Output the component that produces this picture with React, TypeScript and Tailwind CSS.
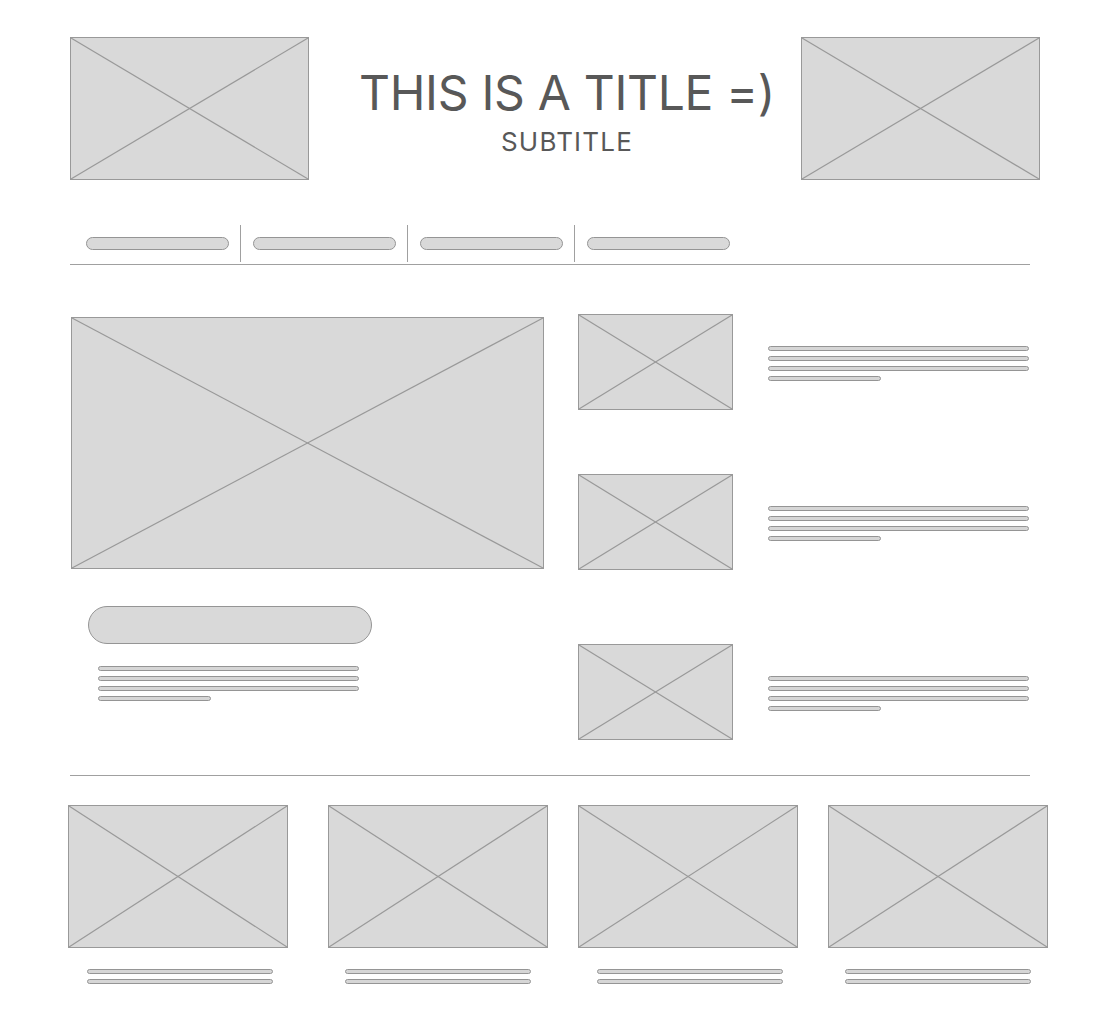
import React from "react";

function Ph({ className }: { className: string }) {
  return (
    <div className={`relative shrink-0 border border-[#999999] bg-[#d9d9d9] ${className}`}>
      <svg className="absolute inset-0 h-full w-full overflow-visible" preserveAspectRatio="none" viewBox="0 0 100 100">
        <line x1="0" y1="0" x2="100" y2="100" stroke="#999999" strokeWidth="1.2" vectorEffect="non-scaling-stroke" />
        <line x1="0" y1="100" x2="100" y2="0" stroke="#999999" strokeWidth="1.2" vectorEffect="non-scaling-stroke" />
      </svg>
    </div>
  );
}

function Bar({ className }: { className: string }) {
  return <div className={`h-[5px] rounded-full border border-[#959595] bg-[#d6d6d6] ${className}`} />;
}

function Lines4({ className }: { className?: string }) {
  return (
    <div className={`flex w-[261px] flex-col gap-[5px] ${className ?? ""}`}>
      <Bar className="w-[261px]" />
      <Bar className="w-[261px]" />
      <Bar className="w-[261px]" />
      <Bar className="w-[113px]" />
    </div>
  );
}

function NavPill() {
  return <div className="h-[13px] w-[143px] shrink-0 rounded-full border border-[#959595] bg-[#d9d9d9]" />;
}

function Sep() {
  return <div className="ml-[11px] mr-[12px] h-[37px] w-px shrink-0 bg-[#a0a0a0]" />;
}

function SideRow({ className }: { className: string }) {
  return (
    <div className={`flex items-center ${className}`}>
      <Ph className="h-[96px] w-[155px]" />
      <Lines4 className="ml-[35px] mt-[3px]" />
    </div>
  );
}

function BottomCard({ className, lineOffset }: { className: string; lineOffset: string }) {
  return (
    <div className={`flex w-[220px] shrink-0 flex-col ${className}`}>
      <Ph className="h-[143px] w-[220px]" />
      <div className={`mt-[21px] flex w-[186px] flex-col gap-[5px] ${lineOffset}`}>
        <Bar className="w-[186px]" />
        <Bar className="w-[186px]" />
      </div>
    </div>
  );
}

export default function App() {
  return (
    <div className="min-h-[1024px] w-[1099px] bg-white pt-[37px] font-['Inter',sans-serif]">
      {/* Header */}
      <div className="flex pl-[70px]">
        <Ph className="h-[143px] w-[239px]" />
        <div className="flex w-[492px] flex-col items-center pl-[24px] text-[#585858]">
          <div className="mt-[32px] text-[48px] leading-none tracking-[-0.3px]">THIS IS A TITLE =)</div>
          <div className="mt-[12px] text-[26px] leading-none tracking-[1.2px]">SUBTITLE</div>
        </div>
        <Ph className="h-[143px] w-[239px]" />
      </div>

      {/* Nav */}
      <div className="ml-[70px] mt-[45px] flex h-[37px] w-[960px] items-center pl-[16px]">
        <NavPill />
        <Sep />
        <NavPill />
        <Sep />
        <NavPill />
        <Sep />
        <NavPill />
      </div>
      <div className="ml-[70px] mt-[2px] h-px w-[960px] bg-[#a0a0a0]" />

      {/* Main */}
      <div className="flex">
        <div className="ml-[71px] flex w-[473px] flex-col">
          <Ph className="mt-[52px] h-[252px] w-[473px]" />
          <div className="ml-[17px] mt-[37px] h-[38px] w-[284px] rounded-full border border-[#959595] bg-[#d9d9d9]" />
          <Lines4 className="ml-[27px] mt-[22px]" />
        </div>
        <div className="ml-[34px] flex flex-col">
          <SideRow className="mt-[49px]" />
          <SideRow className="mt-[64px]" />
          <SideRow className="mt-[74px]" />
        </div>
      </div>

      <div className="ml-[70px] mt-[35px] h-px w-[960px] bg-[#a0a0a0]" />

      {/* Bottom */}
      <div className="mt-[29px] flex">
        <BottomCard className="ml-[68px]" lineOffset="ml-[19px]" />
        <BottomCard className="ml-[40px]" lineOffset="ml-[17px]" />
        <BottomCard className="ml-[30px]" lineOffset="ml-[19px]" />
        <BottomCard className="ml-[30px]" lineOffset="ml-[17px]" />
      </div>
    </div>
  );
}
